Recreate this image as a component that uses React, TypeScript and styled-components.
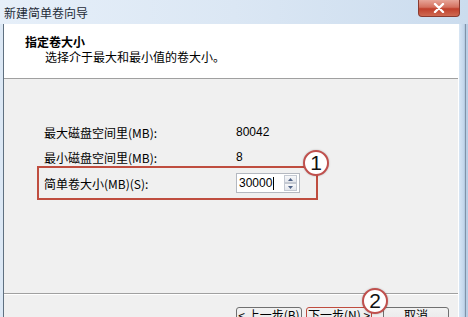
import React from "react";
import styled, { createGlobalStyle } from "styled-components";

const GlobalStyle = createGlobalStyle`
  html, body {
    margin: 0;
    padding: 0;
    width: 468px;
    height: 317px;
    overflow: hidden;
    font-family: "Noto Sans CJK SC", "Liberation Sans", sans-serif;
  }
`;

const Frame = styled.div`
  position: relative;
  width: 468px;
  height: 317px;
  overflow: hidden;
  display: flex;
  flex-direction: column;
  background: linear-gradient(to right, #dce8f5 0%, #d3e2f2 60%, #c3d6eb 100%);
`;

const TitleBar = styled.div`
  height: 24px;
  flex-shrink: 0;
  display: flex;
  align-items: center;
  padding-left: 4px;
  font-size: 12px;
  color: #1e2a36;
  background: linear-gradient(to right, #e6eff9 0%, #dbe7f4 50%, #cbdcee 100%);
`;

const CloseButton = styled.div`
  position: absolute;
  top: 0;
  left: 418px;
  width: 42px;
  height: 17px;
  box-sizing: border-box;
  border: 1px solid #8a3b30;
  border-top: none;
  border-radius: 0 0 4px 4px;
  background: linear-gradient(to bottom, #e7a598 0%, #d4715f 45%, #c0402c 55%, #cf6a52 100%);
  display: flex;
  align-items: center;
  justify-content: center;
`;

const Body = styled.div`
  flex: 1;
  display: flex;
  margin-left: 3px;
  border-left: 1px solid #5f7080;
  min-height: 0;
`;

const Client = styled.div`
  flex: 1;
  display: flex;
  flex-direction: column;
  background: #f0f0f0;
`;

const RightEdge = styled.div`
  width: 10px;
  border-left: 1px solid #ffffff;
  box-sizing: border-box;
  background: linear-gradient(to right, #d8e6f4 0%, #c0d4ea 60%, #6f8296 70%, #b8cde4 80%);
`;

const Header = styled.div`
  height: 55px;
  flex-shrink: 0;
  background: #ffffff;
  border-bottom: 1px solid #a0a0a0;
  padding: 10px 0 0 21px;
  box-sizing: border-box;
  font-size: 12px;
  color: #000;
`;

const HeaderTitle = styled.div`
  font-weight: bold;
  line-height: 15px;
`;

const HeaderSub = styled.div`
  padding-left: 20px;
  line-height: 15px;
`;

const Content = styled.div`
  flex: 1;
  padding: 43px 0 0 33px;
  display: flex;
  flex-direction: column;
  font-size: 12px;
  color: #000;
`;

const Row = styled.div<{ $highlight?: boolean }>`
  display: flex;
  align-items: center;
  height: ${(p) => (p.$highlight ? "30px" : "20px")};
  width: ${(p) => (p.$highlight ? "272px" : "auto")};
  margin-bottom: ${(p) => (p.$highlight ? "0" : "5px")};
  padding-left: ${(p) => (p.$highlight ? "5px" : "7px")};
  border: ${(p) => (p.$highlight ? "2px solid #bf4d3f" : "none")};
  margin-top: ${(p) => (p.$highlight ? "-6px" : "0")};
`;

const Label = styled.span`
  width: 192px;
  flex-shrink: 0;
`;

const Value = styled.span`
  font-family: "Liberation Sans", sans-serif;
`;

const SpinBox = styled.div`
  width: 64px;
  height: 20px;
  box-sizing: border-box;
  border: 1px solid #b4b8c0;
  background: #ffffff;
  display: flex;
  align-items: center;
  padding-left: 2px;
`;

const SpinText = styled.span`
  flex: 1;
  font-family: "Liberation Sans", sans-serif;
  font-size: 12px;
  display: flex;
  align-items: center;
`;

const Caret = styled.span`
  display: inline-block;
  width: 1px;
  height: 13px;
  background: #000;
  margin-left: 1px;
`;

const SpinButtons = styled.div`
  width: 13px;
  height: 16px;
  margin-right: 2px;
  display: flex;
  flex-direction: column;
`;

const SpinArrow = styled.div`
  flex: 1;
  border: 1px solid #c4c9d2;
  background: linear-gradient(to bottom, #f7f8fa, #e3e6ec);
  display: flex;
  align-items: center;
  justify-content: center;
`;

const Footer = styled.div`
  height: 24px;
  flex-shrink: 0;
  box-sizing: border-box;
  border-top: 1px solid #a0a0a0;
  box-shadow: inset 0 1px 0 #ffffff;
  padding-top: 13px;
  display: flex;
  align-items: flex-start;
  justify-content: flex-end;
  padding-right: 9px;
`;

const Button = styled.div<{ $marked?: boolean; $wide?: boolean }>`
  width: 66px;
  height: 23px;
  flex-shrink: 0;
  box-sizing: border-box;
  margin-left: ${(p) => (p.$wide ? "11px" : "4px")};
  border: 1px solid ${(p) => (p.$marked ? "#bf4d3f" : "#707070")};
  border-radius: 3px;
  background: linear-gradient(to bottom, #f2f2f2 0%, #ebebeb 50%, #dddddd 51%, #cfcfcf 100%);
  font-size: 12px;
  line-height: 13px;
  text-align: center;
  color: #000;
`;

const Marker = styled.div`
  position: absolute;
  width: 26px;
  height: 26px;
  box-sizing: border-box;
  border: 2px solid #c0504d;
  border-radius: 50%;
  background: #ffffff;
  display: flex;
  align-items: center;
  justify-content: center;
  font-family: "Liberation Sans", sans-serif;
  font-size: 21px;
  color: #111;
  box-shadow: 0 0 2px rgba(0, 0, 0, 0.25);
`;

const Tri = ({ up }: { up?: boolean }) => (
  <svg width="5" height="3" viewBox="0 0 5 3">
    <path d={up ? "M0 3 L2.5 0 L5 3 Z" : "M0 0 L2.5 3 L5 0 Z"} fill="#4d6185" />
  </svg>
);

export default function App() {
  return (
    <>
      <GlobalStyle />
      <Frame>
        <TitleBar>新建简单卷向导</TitleBar>
        <CloseButton>
          <svg width="12" height="10" viewBox="0 0 12 10">
            <path d="M2 1 L10 9 M10 1 L2 9" stroke="#ffffff" strokeWidth="2.4" strokeLinecap="round" />
          </svg>
        </CloseButton>
        <Body>
          <Client>
            <Header>
              <HeaderTitle>指定卷大小</HeaderTitle>
              <HeaderSub>选择介于最大和最小值的卷大小。</HeaderSub>
            </Header>
            <Content>
              <Row>
                <Label>最大磁盘空间里(MB):</Label>
                <Value>80042</Value>
              </Row>
              <Row>
                <Label>最小磁盘空间里(MB):</Label>
                <Value>8</Value>
              </Row>
              <Row $highlight>
                <Label>简单卷大小(MB)(S):</Label>
                <SpinBox>
                  <SpinText>
                    30000
                    <Caret />
                  </SpinText>
                  <SpinButtons>
                    <SpinArrow>
                      <Tri up />
                    </SpinArrow>
                    <SpinArrow>
                      <Tri />
                    </SpinArrow>
                  </SpinButtons>
                </SpinBox>
              </Row>
            </Content>
            <Footer>
              <Button>&lt; 上一步(B)</Button>
              <Button $marked>下一步(N) &gt;</Button>
              <Button $wide>取消</Button>
            </Footer>
          </Client>
          <RightEdge />
        </Body>
        <Marker style={{ left: 303, top: 150 }}>1</Marker>
        <Marker style={{ left: 362, top: 288 }}>2</Marker>
      </Frame>
    </>
  );
}
